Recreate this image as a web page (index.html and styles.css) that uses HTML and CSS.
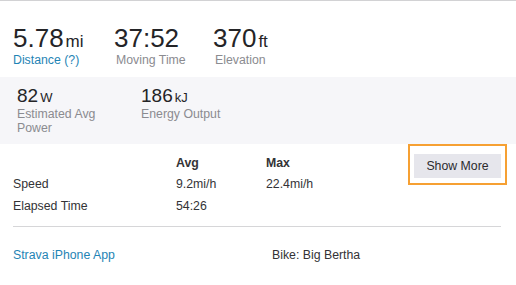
FILE: index.html
```html
<!DOCTYPE html>
<html>
<head>
<meta charset="utf-8">
<link rel="stylesheet" href="styles.css">
</head>
<body>
<div class="card">
  <div class="top-stats">
    <div class="stat">
      <div class="val">5.78<span class="unit">mi</span></div>
      <div class="lbl link">Distance (?)</div>
    </div>
    <div class="stat">
      <div class="val">37:52</div>
      <div class="lbl">Moving Time</div>
    </div>
    <div class="stat">
      <div class="val">370<span class="unit">ft</span></div>
      <div class="lbl">Elevation</div>
    </div>
  </div>
  <div class="sec-stats">
    <div class="sstat wide">
      <div class="sval">82<span class="sunit">W</span></div>
      <div class="slbl">Estimated Avg Power</div>
    </div>
    <div class="sstat">
      <div class="sval">186<span class="sunit">kJ</span></div>
      <div class="slbl">Energy Output</div>
    </div>
  </div>
  <div class="more">
    <div class="splits">
      <div class="cell head"></div>
      <div class="cell head b">Avg</div>
      <div class="cell head b">Max</div>
      <div class="cell">Speed</div>
      <div class="cell">9.2mi/h</div>
      <div class="cell">22.4mi/h</div>
      <div class="cell">Elapsed Time</div>
      <div class="cell">54:26</div>
      <div class="cell"></div>
    </div>
    <button class="show-more">Show More</button>
  </div>
  <div class="sep"></div>
  <div class="foot">
    <div class="device">Strava iPhone App</div>
    <div class="bike">Bike: Big Bertha</div>
  </div>
</div>
</body>
</html>
```
FILE: styles.css
```css
html, body {
  margin: 0;
  padding: 0;
  background: #ffffff;
}
body {
  font-family: "Liberation Sans", Arial, sans-serif;
  color: #2b2b2f;
  width: 516px;
  height: 285px;
  overflow: hidden;
}
.card {
  border-top: 1px solid #d2d2d4;
}
.top-stats {
  display: grid;
  grid-template-columns: 101px 99px auto;
  padding: 22px 13px 0 13px;
}
.val {
  font-size: 26px;
  line-height: 30px;
  color: #242427;
  white-space: nowrap;
}
.unit {
  font-size: 17px;
  line-height: 1;
  margin-left: 2px;
}
.lbl {
  font-size: 12.3px;
  line-height: 15px;
  color: #8b8b90;
  white-space: nowrap;
}
.stat + .stat .lbl {
  padding-left: 2px;
}
.lbl.link {
  color: #1f84b5;
}
.sec-stats {
  margin-top: 9px;
  background: #f6f6f9;
  display: flex;
  gap: 24px;
  padding: 8px 17px 9px 17px;
}
.sstat.wide {
  width: 100px;
}
.sval {
  font-size: 19px;
  line-height: 22px;
  color: #242427;
  white-space: nowrap;
}
.sunit {
  font-size: 13px;
  line-height: 1;
  margin-left: 2px;
}
.slbl {
  font-size: 12.3px;
  line-height: 14px;
  color: #8b8b90;
}
.more {
  display: flex;
  align-items: flex-start;
  padding: 9px 15px 0 13px;
}
.splits {
  flex: 1;
  display: grid;
  grid-template-columns: 163px 90px 1fr;
  grid-template-rows: 20px 22px 22px;
  font-size: 12.3px;
  line-height: 22px;
  color: #333336;
}
.cell.head {
  line-height: 20px;
}
.cell.b {
  font-weight: bold;
}
.show-more {
  position: relative;
  margin-top: 1px;
  width: 87px;
  height: 24px;
  padding: 0;
  border: none;
  background: #e6e6ec;
  font-family: "Liberation Sans", Arial, sans-serif;
  font-size: 12.3px;
  color: #2b2b2f;
}
.show-more::after {
  content: "";
  position: absolute;
  left: -6px;
  top: -10px;
  right: -6px;
  bottom: -7px;
  border: 2px solid #f6a033;
  pointer-events: none;
}
.sep {
  margin: 9px 15px 0 13px;
  height: 1px;
  background: #d6d6d8;
}
.foot {
  display: flex;
  padding: 18px 13px 0 13px;
  font-size: 12.3px;
  line-height: 20px;
}
.device {
  width: 259px;
  color: #1f84b5;
}
.bike {
  color: #333336;
}
```
